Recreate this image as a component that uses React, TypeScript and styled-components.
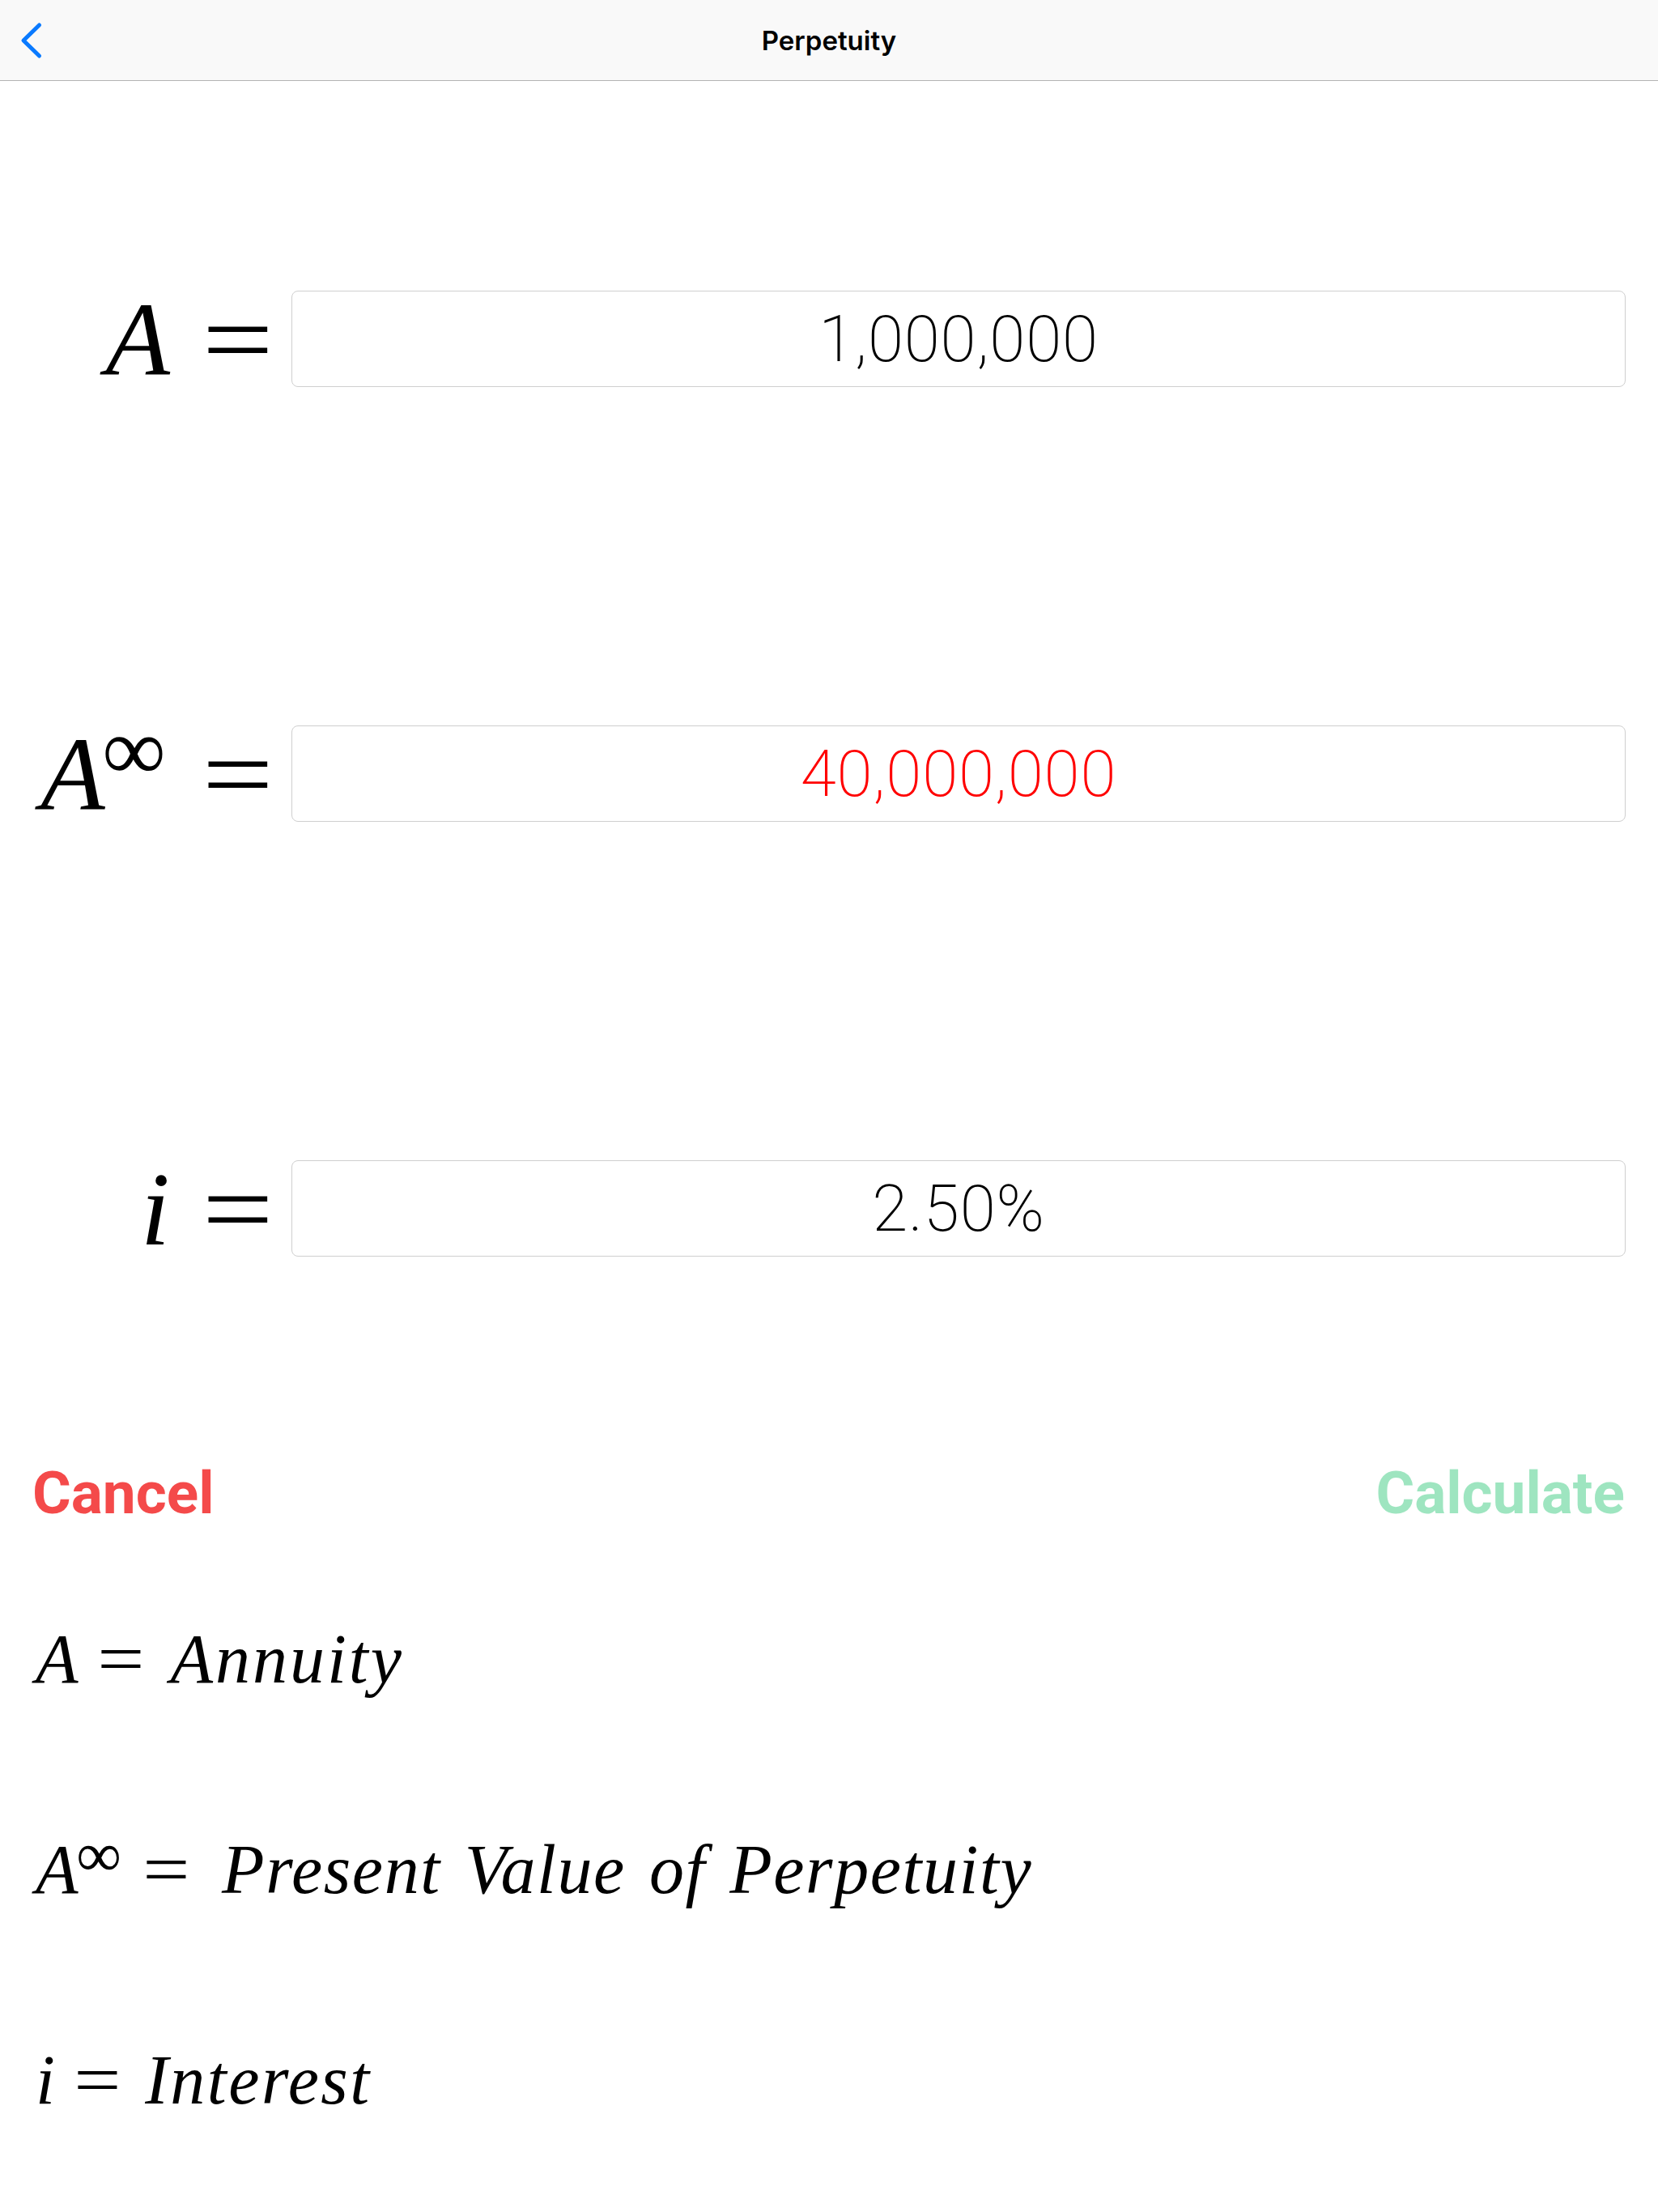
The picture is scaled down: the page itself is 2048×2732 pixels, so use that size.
import React from 'react';
import styled, { createGlobalStyle } from 'styled-components';

const GlobalStyle = createGlobalStyle`
    html, body {
        margin: 0;
        padding: 0;
        background: #ffffff;
    }

    body {
        width: 2048px;
        min-height: 2732px;
    }
`

const Page = styled.div`
    width: 2048px;
    min-height: 2732px;
    background: #ffffff;
`

const NavBar = styled.header`
    height: 100px;
    box-sizing: border-box;
    display: grid;
    grid-template-columns: 1fr auto 1fr;
    align-items: center;
    background: #f9f9f9;
    border-bottom: 1px solid #b4b4b4;
`

const BackButton = styled.button`
    justify-self: start;
    display: flex;
    align-items: center;
    padding: 0 0 0 25px;
    border: none;
    background: none;
    cursor: pointer;
`

const Title = styled.h1`
    margin: 0;
    font-family: Inter, "Noto Sans", sans-serif;
    font-size: 33px;
    font-weight: 600;
    color: #000000;
`

const Form = styled.div`
    display: flex;
    flex-direction: column;
    gap: 418px;
    padding: 259px 40px 0 0;
`

const Row = styled.div`
    display: grid;
    grid-template-columns: 330px 1fr;
    grid-auto-rows: 119px;
    column-gap: 30px;
    align-items: center;
`

const Label = styled.div`
    text-align: right;
    white-space: nowrap;
    font-family: "Liberation Serif", "Times New Roman", serif;
    font-size: 130px;
    line-height: 1;
    color: #000000;
`

const Var = styled.span`
    font-style: italic;
`

const Sup = styled.span<{ $size: number; $raise: number }>`
    font-size: ${p => p.$size}px;
    line-height: 0;
    vertical-align: ${p => p.$raise}px;
    margin-left: -0.03em;
`

const Equals = styled.span<{ $gapLeft: string; $gapRight?: string }>`
    display: inline-block;
    transform: scaleX(1.2);
    margin-left: ${p => p.$gapLeft};
    margin-right: ${p => p.$gapRight || '0'};
`

const Field = styled.div<{ $color?: string }>`
    height: 119px;
    box-sizing: border-box;
    display: flex;
    align-items: center;
    justify-content: center;
    border: 1px solid #cfcfcf;
    border-radius: 8px;
    font-family: Roboto, "Liberation Sans", sans-serif;
    font-weight: 200;
    font-size: 80px;
    letter-spacing: 0.8px;
    line-height: 1;
    color: ${p => p.$color || '#000000'};
`

const Actions = styled.div`
    display: flex;
    justify-content: space-between;
    margin-top: 256px;
    padding: 0 41px 0 40px;
`

const ActionButton = styled.button<{ $color: string }>`
    padding: 0;
    border: none;
    background: none;
    font-family: Roboto, "Liberation Sans", sans-serif;
    font-weight: 700;
    font-size: 73px;
    line-height: 1;
    color: ${p => p.$color};
    cursor: pointer;
`

const Legend = styled.div`
    display: flex;
    flex-direction: column;
    gap: 174px;
    margin-top: 125px;
    padding-left: 44px;
`

const LegendLine = styled.div`
    font-family: "Liberation Serif", "Times New Roman", serif;
    font-size: 86px;
    line-height: 1;
    white-space: nowrap;
    color: #000000;
`

const Words = styled.span<{ $spacing: number }>`
    font-style: italic;
    letter-spacing: ${p => p.$spacing}px;
    word-spacing: 6px;
`

const ChevronLeft = () => (
    <svg width="28" height="46" viewBox="0 0 28 46" fill="none">
        <path d="M23.5 4 L4 23 L23.5 42" stroke="#0a7aff" strokeWidth="5" strokeLinecap="round" strokeLinejoin="round"/>
    </svg>
)

const App = () => {
    return (
        <Page>
            <GlobalStyle/>
            <NavBar>
                <BackButton aria-label="Back">
                    <ChevronLeft/>
                </BackButton>
                <Title>Perpetuity</Title>
                <div/>
            </NavBar>

            <Form>
                <Row>
                    <Label>
                        <Var>A</Var>
                        <Equals $gapLeft="0.36em">=</Equals>
                    </Label>
                    <Field>1,000,000</Field>
                </Row>
                <Row>
                    <Label>
                        <Var>A</Var>
                        <Sup $size={110} $raise={37}>∞</Sup>
                        <Equals $gapLeft="0.4em">=</Equals>
                    </Label>
                    <Field $color="#ff0000">40,000,000</Field>
                </Row>
                <Row>
                    <Label>
                        <Var>i</Var>
                        <Equals $gapLeft="0.36em">=</Equals>
                    </Label>
                    <Field>2.50%</Field>
                </Row>
            </Form>

            <Actions>
                <ActionButton $color="#f44a4a">Cancel</ActionButton>
                <ActionButton $color="#9ee5c0">Calculate</ActionButton>
            </Actions>

            <Legend>
                <LegendLine>
                    <Var>A</Var>
                    <Equals $gapLeft="0.33em" $gapRight="0.43em">=</Equals>
                    <Words $spacing={3}>Annuity</Words>
                </LegendLine>
                <LegendLine>
                    <Var>A</Var>
                    <Sup $size={78} $raise={21}>∞</Sup>
                    <Equals $gapLeft="0.36em" $gapRight="0.52em">=</Equals>
                    <Words $spacing={1.6}>Present Value of Perpetuity</Words>
                </LegendLine>
                <LegendLine>
                    <Var>i</Var>
                    <Equals $gapLeft="0.33em" $gapRight="0.4em">=</Equals>
                    <Words $spacing={2.5}>Interest</Words>
                </LegendLine>
            </Legend>
        </Page>
    );
};

export default App;
